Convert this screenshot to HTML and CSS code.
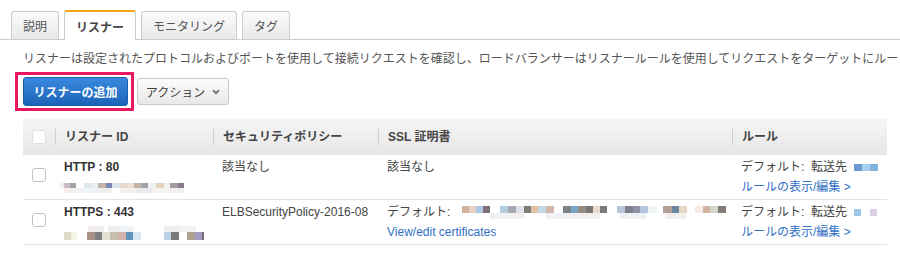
FILE: index.html
```html
<!DOCTYPE html>
<html lang="ja">
<head>
  <meta charset="UTF-8" />
  <title>リスナー</title>
  <link rel="stylesheet" href="styles.css">
</head>
<body>

<div class="tabs">
  <div class="tab">説明</div>
  <div class="tab active">リスナー</div>
  <div class="tab">モニタリング</div>
  <div class="tab">タグ</div>
</div>

<div class="content">
  <p class="intro">リスナーは設定されたプロトコルおよびポートを使用して接続リクエストを確認し、ロードバランサーはリスナールールを使用してリクエストをターゲットにルー</p>

  <div class="toolbar">
    <div class="highlight">
      <button class="btn-primary">リスナーの追加</button>
    </div>
    <button class="btn-action">アクション
      <svg class="caret" width="8" height="6" viewBox="0 0 8 6"><path d="M1 1.2 L4 4.2 L7 1.2" fill="none" stroke="#777" stroke-width="2"/></svg>
    </button>
  </div>

  <table class="listeners">
    <colgroup>
      <col style="width:32px">
      <col style="width:158px">
      <col style="width:165px">
      <col style="width:354px">
      <col style="width:155px">
    </colgroup>
    <thead>
      <tr>
        <th class="check-col"><span class="checkbox head"></span></th>
        <th><div class="th-label">リスナー ID</div></th>
        <th><div class="th-label">セキュリティポリシー</div></th>
        <th><div class="th-label">SSL 証明書</div></th>
        <th><div class="th-label">ルール</div></th>
      </tr>
    </thead>
    <tbody>
      <tr>
        <td class="check-col"><span class="checkbox"></span></td>
        <td>
          <div class="proto">HTTP : 80</div>
          <div class="line"><span class="mosaic m1"></span></div>
        </td>
        <td>該当なし</td>
        <td>該当なし</td>
        <td>
          <div class="line nowrap">デフォルト:&nbsp;&nbsp;転送先 <span class="mosaic m4"></span></div>
          <div class="line"><a href="#">ルールの表示/編集 &gt;</a></div>
        </td>
      </tr>
      <tr>
        <td class="check-col"><span class="checkbox"></span></td>
        <td>
          <div class="proto">HTTPS : 443</div>
          <div class="line"><span class="mosaic m2"></span></div>
        </td>
        <td class="latin">ELBSecurityPolicy-2016-08</td>
        <td>
          <div class="line nowrap">デフォルト: <span class="mosaic m3"></span></div>
          <div class="line"><a href="#" class="latin">View/edit certificates</a></div>
        </td>
        <td>
          <div class="line nowrap">デフォルト:&nbsp;&nbsp;転送先 <span class="mosaic m5"></span></div>
          <div class="line"><a href="#">ルールの表示/編集 &gt;</a></div>
        </td>
      </tr>
    </tbody>
  </table>
</div>

</body>
</html>
```

FILE: styles.css
```css
body {
  margin: 0;
  font-family: "Liberation Sans", "Noto Sans CJK JP", sans-serif;
  font-size: 12px;
  color: #444;
  background: #fff;
  overflow: hidden;
}

/* tabs */

.tabs {
  display: flex;
  align-items: flex-end;
  gap: 5px;
  height: 29px;
  padding: 10px 0 0 11px;
  border-bottom: 1px solid #ccc;
}

.tab {
  display: flex;
  align-items: center;
  height: 27px;
  padding: 0 11px;
  border: 1px solid #ccc;
  border-bottom: none;
  border-radius: 3px 3px 0 0;
  background: linear-gradient(#fbfbfb, #e9e9e9);
  color: #555;
}

.tab.active {
  height: 28px;
  margin-bottom: -1px;
  border-top: 2px solid #f7a21b;
  background: #fff;
  font-weight: bold;
  color: #444;
}

/* content */

.content {
  padding-left: 23px;
}

.intro {
  margin: 11px 0 0;
  line-height: 16px;
  white-space: nowrap;
  overflow: hidden;
  color: #555;
}

.toolbar {
  display: flex;
  align-items: center;
  gap: 3px;
  margin: 5px 0 0 -8px;
}

.highlight {
  display: flex;
  border: 3px solid #e8175f;
  padding: 2px 3px 2px 5px;
}

.btn-primary {
  width: 105px;
  height: 29px;
  padding: 0;
  border: 1px solid #1c5ea8;
  border-radius: 3px;
  background: linear-gradient(#3a8ae0, #1b63b8);
  color: #fff;
  font-family: inherit;
  font-size: 12px;
  font-weight: bold;
}

.btn-action {
  display: flex;
  align-items: center;
  justify-content: center;
  gap: 7px;
  width: 92px;
  height: 27px;
  padding: 0;
  border: 1px solid #c8c8c8;
  border-radius: 3px;
  background: linear-gradient(#fcfcfc, #e8e8e8);
  color: #444;
  font-family: inherit;
  font-size: 12px;
}

/* table */

.listeners {
  margin-top: 8px;
  width: 864px;
  table-layout: fixed;
  border-collapse: collapse;
}

.listeners th {
  padding: 0;
  text-align: left;
  background: linear-gradient(#f5f5f5, #e7e7e7);
  font-weight: bold;
  color: #444;
}

.th-label {
  margin: 10px 0;
  padding-left: 9px;
  line-height: 16px;
  border-left: 1px solid #d0d0d0;
}

.listeners th.check-col {
  padding: 0 0 0 9px;
  vertical-align: middle;
}

.listeners td {
  padding: 2px 9px 2px;
  line-height: 20px;
  height: 40px;
  vertical-align: top;
  border-bottom: 1px solid #e2e2e2;
}

.listeners td.check-col {
  padding: 13px 0 0 9px;
  height: 29px;
}

.checkbox {
  display: block;
  width: 12px;
  height: 12px;
  border: 1px solid #c2c2c2;
  border-radius: 3px;
  background: #fff;
}

.checkbox.head {
  border-color: #e0e0e0;
}

.line {
  height: 20px;
}

.proto {
  font-weight: bold;
  color: #333;
}

.latin {
  font-family: "Liberation Sans", Arial, sans-serif;
}

.nowrap {
  white-space: nowrap;
}

.listeners a {
  color: #2f6fc4;
  text-decoration: none;
}

/* blurred values */

.mosaic {
  display: inline-block;
  vertical-align: middle;
  background-repeat: no-repeat;
}

.m1 {
  width: 140px;
  height: 10px;
  margin-left: -4px;
  background-size: 100% 5px;
  background-position: top, bottom;
  background-image:
    linear-gradient(to right, #f7efe9 0 4px, #c9bcc3 4px 10px, #9ba4aa 10px 16px, #fff 16px 24px, #dde9f0 24px 32px, #eaeff2 32px 38px, #c7b3a8 38px 46px, #7789b6 46px 52px, #d9e6ef 52px 60px, #e3dacd 60px 68px, #ebe3d8 68px 74px, #c4b1a6 74px 82px, #9aa1a9 82px 88px, #eff1f3 88px 96px, #e2d4bd 96px 104px, #f2f2f2 104px 110px, #a69b9c 110px 118px, #887d8c 118px 124px, #fff 124px),
    linear-gradient(to right, #fff 0 4px, #f6ecec 4px 12px, #f2f2f2 12px 20px, #eef4f8 20px 34px, #eeeeee 34px 52px, #fff 52px 60px, #f4f0ee 60px 76px, #eaeaea 76px 92px, #f5f3f0 92px 110px, #f0eeee 110px 124px, #fff 124px);
}

.m2 {
  width: 140px;
  height: 14px;
  background-size: 100% 6px, 100% 8px;
  background-position: top, bottom;
  background-image:
    linear-gradient(to right, #fff 0 24px, #f6eeee 24px 32px, #f0eff2 32px 40px, #fff 40px 44px, #eceef0 44px 56px, #f1f4f7 56px 70px, #fff 70px 100px, #efedf0 100px 116px, #f5f2f2 116px 132px, #fff 132px),
    linear-gradient(to right, #dcdcc9 0 7px, #f3f3e6 7px 13px, #fff 13px 23px, #a89186 23px 31px, #7e7f80 31px 38px, #e3e2d4 38px 46px, #c8beae 46px 54px, #d3b4a8 54px 62px, #5f95bb 62px 69px, #d9e7f0 69px 77px, #fff 77px 100px, #bcd2e6 100px 107px, #7c7a78 107px 115px, #fff 115px 123px, #b0a08f 123px 131px, #a39cc4 131px 138px, #7a6a7c 138px 140px);
}

.m3 {
  width: 266px;
  height: 13px;
  margin-left: 6px;
  background-size: 100% 7px, 100% 6px;
  background-position: top, bottom;
  background-image:
    linear-gradient(to right, #fff 0 2px, #d0b29d 2px 9px, #e6d3c6 9px 16px, #abc8e4 16px 23px, #7f6f7a 23px 30px, #fff 30px 40px, #b4cde0 40px 48px, #a8a9b0 48px 56px, #dde3ea 56px 64px, #7b7d76 64px 71px, #e0c2a4 71px 78px, #c4d8e8 78px 86px, #d2b8a9 86px 94px, #fff 94px 103px, #7d8584 103px 111px, #79a5c8 111px 118px, #948c80 118px 126px, #7d7572 126px 133px, #e8dcd0 133px 140px, #7a7878 140px 147px, #fff 147px 157px, #b7c6d8 157px 165px, #7e7f88 165px 173px, #8f8fa8 173px 180px, #b3c5dc 180px 188px, #eef4f4 188px 197px, #fff 197px 203px, #b59e94 203px 212px, #6b86a0 212px 219px, #e7d8c6 219px 227px, #fff 227px 235px, #f5ebe6 235px 243px, #d2b4a0 243px 250px, #d2d7cc 250px 258px, #857c7a 258px 266px),
    linear-gradient(to right, #fff 0 30px, #f0f0f2 30px 48px, #f3f1ee 48px 64px, #fff 64px 86px, #eef2f6 86px 110px, #f2f0ee 110px 140px, #fff 140px 160px, #eff0f3 160px 186px, #fff 186px 205px, #f3efec 205px 226px, #fff 226px);
}

.m4 {
  width: 24px;
  height: 7px;
  margin-left: 4px;
  background-image: linear-gradient(to right, #6a9ad0 0 8px, #a8d0ee 8px 16px, #80b4e0 16px 24px);
}

.m5 {
  width: 24px;
  height: 7px;
  margin-left: 4px;
  background-image: linear-gradient(to right, #9cc8e8 0 7px, #fff 7px 16px, #ddd0e4 16px 23px, #fff 23px);
}
```
